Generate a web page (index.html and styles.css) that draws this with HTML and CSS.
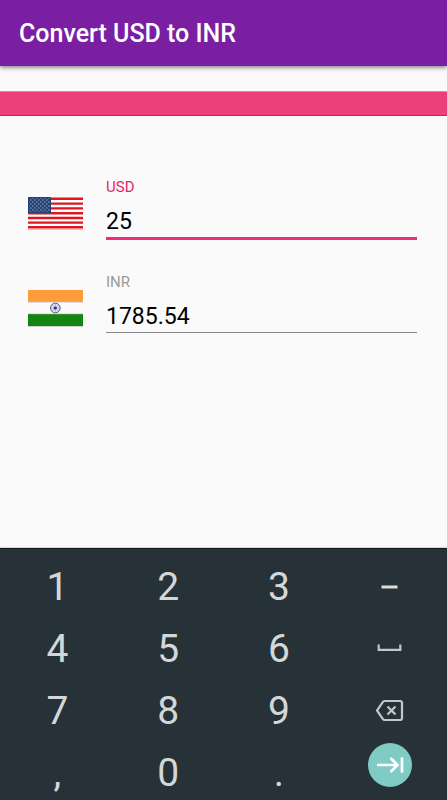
FILE: index.html
```html
<!DOCTYPE html>
<html lang="en">
<head>
<meta charset="utf-8">
<meta name="viewport" content="width=device-width, initial-scale=1">
<title>Convert USD to INR</title>
<link rel="stylesheet" href="styles.css">
</head>
<body>
<header class="app-bar"><h1 class="title">Convert USD to INR</h1></header>
<main class="content">
  <div class="banner"></div>
  <form class="converter">
    <div class="currency">
      <svg class="flag" viewBox="0 -3 55 38" aria-hidden="true">
        <defs>
          <pattern id="stars" width="4" height="4" patternUnits="userSpaceOnUse">
            <path d="M0 1h1.5M2 3h1.5" stroke="#9dacc9" stroke-width="1"/>
          </pattern>
        </defs>
        <path fill="#ccc" d="M0 31h55v2H0z"/>
        <path fill="#fff" d="M0 1h55v31H0z"/>
        <path stroke="#dc1720" stroke-width="2.4" d="M0 1.8h55M0 6.6h55M0 11.4h55M0 16.2h55M0 21h55M0 25.600h55M0 30.300h55"/>
        <path fill="#254174" d="M0 0h23v16H0z"/>
        <path fill="url(#stars)" d="M1 1h21v14H1z"/>
      </svg>
      <div class="field field-active">
        <label for="usd">USD</label>
        <input id="usd" type="text" inputmode="decimal" value="25">
      </div>
    </div>
    <div class="currency">
      <svg class="flag" viewBox="0 0 55 38" aria-hidden="true">
        <path fill="#ccc" d="M0 36h55v2H0z"/>
        <path fill="#ff9d3c" d="M0 1h55v12H0z"/>
        <path fill="#fafafa" d="M0 13h55v12H0z"/>
        <path fill="#138510" d="M0 25h55v12H0z"/>
        <path stroke="#c9c4bd" stroke-width=".7" d="M0 13.2h55M0 24.8h55"/>
        <circle cx="27.3" cy="19" r="4.8" fill="#e4e4f1" stroke="#55558f" stroke-width="1"/>
        <path stroke="#8585b5" stroke-width=".5" d="M23 19h8.6M27.3 14.7v8.6M24.3 16l6 6M24.3 22l6-6"/>
        <circle cx="27.3" cy="19" r="1.6" fill="#33337c"/>
      </svg>
      <div class="field">
        <label for="inr">INR</label>
        <input id="inr" type="text" inputmode="decimal" value="1785.54">
      </div>
    </div>
  </form>
</main>
<section class="keypad" aria-label="Number keypad">
  <button class="key" type="button">1</button>
  <button class="key" type="button">2</button>
  <button class="key" type="button">3</button>
  <button class="key" type="button" aria-label="Minus"><svg class="icon" viewBox="0 0 32 32"><path d="M7.500 16h16" stroke-width="3" stroke="#dcddda"/></svg></button>
  <button class="key" type="button">4</button>
  <button class="key" type="button">5</button>
  <button class="key" type="button">6</button>
  <button class="key" type="button" aria-label="Space"><svg class="icon" viewBox="0 0 32 32"><path d="M4.700 11.500v5.300h21.600v-5.300" stroke-width="2.2"/></svg></button>
  <button class="key" type="button">7</button>
  <button class="key" type="button">8</button>
  <button class="key" type="button">9</button>
  <button class="key" type="button" aria-label="Backspace"><svg class="icon" viewBox="0 0 32 32"><path d="M10.500 6H26q2 0 2 2v15q0 2-2 2H10.500q-1 0-1.600-1L3 15.500 8.900 7Q9.500 6 10.500 6zM13.500 11.500l8 8M21.500 11.500l-8 8" stroke-width="2.200"/></svg></button>
  <button class="key" type="button">,</button>
  <button class="key" type="button">0</button>
  <button class="key" type="button">.</button>
  <button class="key next" type="button" aria-label="Next"><svg class="icon" viewBox="0 0 32 32"><path d="M3 16h20M16.500 9l7 7-7 7M28 8.500v15" stroke-width="2.700"/></svg></button>
</section>
</body>
</html>
```
FILE: styles.css
```css
* {
  box-sizing: border-box;
}

body {
  display: flex;
  flex-direction: column;
  min-height: 100vh;
  margin: 0;
  background: #fafafa;
  color: #000;
  font-family: Roboto, sans-serif;
}

.app-bar {
  padding: 18px 19px 16px;
  background: #7b1fa2;
  box-shadow: 0 1px 5px rgba(0, 0, 0, 0.6);
}

.title {
  margin: 0;
  color: #fff;
  font-size: 25px;
  font-weight: 500;
  line-height: 32px;
}

.content {
  flex: 1;
  padding-top: 25px;
}

.banner {
  height: 25px;
  border-top: 1px solid #f17ca2;
  border-bottom: 1px solid #d81b60;
  background: #ec407a;
}

.converter {
  display: flex;
  flex-direction: column;
  gap: 31px;
  padding: 60px 30px 0 28px;
}

.currency {
  display: flex;
  align-items: flex-start;
  gap: 23px;
}

.flag {
  flex: none;
  width: 55px;
  height: 38px;
  margin-top: 18px;
}

.field {
  display: flex;
  flex: 1;
  flex-direction: column;
  min-width: 0;
}

.field label {
  color: #999;
  font-size: 15px;
  line-height: 22px;
}

.field input {
  width: 100%;
  height: 40px;
  padding: 7px 0 0;
  border: 0;
  border-bottom: 1px solid #858585;
  outline: 0;
  background: none;
  color: #000;
  font: 23px/32px Roboto, sans-serif;
}

.field-active label {
  color: #e91e63;
}

.field-active input {
  height: 42px;
  border-bottom: 3px solid #ec2f7b;
}

.keypad {
  display: grid;
  grid-template-columns: repeat(4, 1fr);
  grid-auto-rows: 52px;
  gap: 10px 0;
  padding: 12px 2px 1px;
  border-top: 1px solid #11181b;
  background: #263238;
  box-shadow: 0 0 2px rgba(0, 0, 0, 0.4);
}

.key {
  display: flex;
  align-items: center;
  justify-content: center;
  padding: 0;
  border: 0;
  background: none;
  color: #d4d7d8;
  font: 39px/52px Roboto, sans-serif;
}

.icon {
  width: 32px;
  height: 32px;
  fill: none;
  stroke: #c3c7c9;
}

.next {
  place-self: end center;
  width: 44px;
  height: 44px;
  margin-bottom: 12px;
  border-radius: 50%;
  background: #80cbc4;
}

.next .icon {
  stroke: #fff;
}
```
